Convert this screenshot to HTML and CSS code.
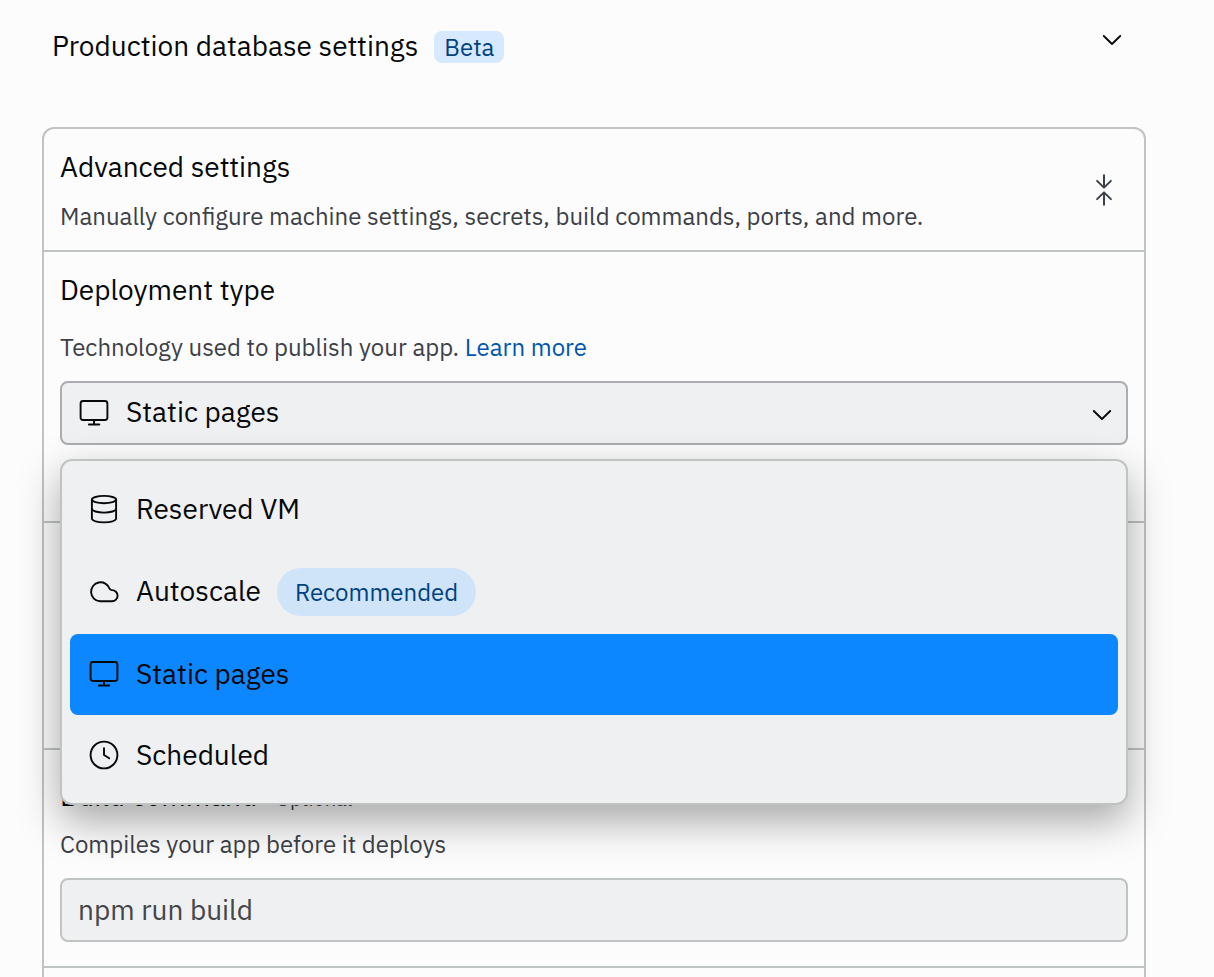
FILE: index.html
```html
<!DOCTYPE html>
<html lang="en">
<head>
<meta charset="utf-8">
<title>Publishing settings</title>
<link rel="stylesheet" href="styles.css">
</head>
<body>
<header class="db-header">
  <h2 class="title">Production database settings</h2>
  <span class="badge">Beta</span>
  <svg class="chevron db-chevron" viewBox="0 0 20 12"><path d="M1.8 2 10 10l8.2-8"/></svg>
</header>

<main class="card">
  <section class="section advanced">
    <div>
      <h2 class="title">Advanced settings</h2>
      <p class="hint">Manually configure machine settings, secrets, build commands, ports, and more.</p>
    </div>
    <svg class="collapse" viewBox="0 0 20 34"><path d="M10 2.3v12.3M3.1 7.9l6.9 6.7 6.9-6.7M10 31.7V19.4M3.1 26.1l6.9-6.7 6.9 6.7"/></svg>
  </section>

  <section class="section deployment">
    <h2 class="title">Deployment type</h2>
    <p class="hint">Technology used to publish your app. <a class="link" href="#">Learn more</a></p>
    <div class="select-wrap">
      <div class="select">
        <svg class="icon" viewBox="0 0 32 32"><rect x="2.6" y="4" width="26.8" height="19" rx="2.5"/><path d="M16 23v4.5M10.9 27.5h10.4"/></svg>
        <span class="select-value">Static pages</span>
        <svg class="chevron" viewBox="0 0 20 12"><path d="M1.8 2 10 10l8.2-8"/></svg>
      </div>
      <ul class="menu">
        <li class="option">
          <svg class="icon" viewBox="0 0 32 32"><ellipse cx="16" cy="6.6" rx="12.1" ry="3.7"/><path d="M3.9 6.6v19c0 2.1 5.4 3.8 12.1 3.8s12.1-1.7 12.1-3.8v-19M3.9 15.8c0 2.1 5.4 3.8 12.1 3.8s12.1-1.7 12.1-3.8"/></svg>
          <span>Reserved VM</span>
        </li>
        <li class="option option-tall">
          <svg class="icon" viewBox="0 0 32 32"><path d="M12 25.3h12a5.4 5.4 0 0 0 0-11.2c-.9 0-1.8-.4-2.4-1.3A9.5 9.5 0 1 0 12 25.3z"/></svg>
          <span class="label">Autoscale</span>
          <span class="pill">Recommended</span>
        </li>
        <li class="option option-selected">
          <svg class="icon" viewBox="0 0 32 32"><rect x="2.6" y="4" width="26.8" height="19" rx="2.5"/><path d="M16 23v4.5M10.9 27.5h10.4"/></svg>
          <span>Static pages</span>
        </li>
        <li class="option">
          <svg class="icon" viewBox="0 0 32 32"><circle cx="16" cy="16" r="13.4"/><path d="M16 9.3V16l5.2 3.2"/></svg>
          <span>Scheduled</span>
        </li>
      </ul>
    </div>
  </section>

  <section class="section spacer"></section>

  <section class="section build">
    <h2 class="title">Build command <span class="optional">Optional</span></h2>
    <p class="hint">Compiles your app before it deploys</p>
    <div class="input">npm run build</div>
  </section>
</main>
</body>
</html>
```
FILE: styles.css
```css
* { box-sizing: border-box; }

body {
  margin: 0;
  height: 977px;
  overflow: hidden;
  background: #fcfcfc;
  color: #07080a;
  font-family: "IBM Plex Sans", "Open Sans", sans-serif;
  font-size: 28px;
}

h2, p, ul { margin: 0; padding: 0; }

.title { height: 36px; font-size: 28px; font-weight: 400; line-height: 36px; white-space: nowrap; }
.hint { color: #3c4048; font-size: 24px; line-height: 32px; white-space: nowrap; }
.link { color: #0056ad; text-decoration: none; }

.db-header {
  display: flex;
  align-items: baseline;
  gap: 16px;
  height: 127px;
  padding: 28px 92px 0 52px;
}

.badge {
  padding: 0 10px;
  border-radius: 8px;
  background: #d7e9ff;
  color: #004182;
  font-size: 24px;
  line-height: 32px;
}

.chevron {
  width: 20px;
  height: 12px;
  margin-left: auto;
  fill: none;
  stroke: #07080a;
  stroke-width: 1.9;
  stroke-linecap: round;
  stroke-linejoin: round;
}
.db-chevron { align-self: flex-start; margin-top: 6px; }

.card {
  width: 1104px;
  height: 850px;
  margin-left: 42px;
  border: 2px solid #bfc3c2;
  border-bottom: 0;
  border-radius: 12px 12px 0 0;
}

.section { padding: 0 16px; border-bottom: 2px solid #bfc3c2; }

.advanced {
  display: flex;
  justify-content: space-between;
  align-items: flex-start;
  height: 123px;
  padding-top: 20px;
}
.advanced .hint { margin-top: 15px; }

.collapse {
  width: 20px;
  height: 34px;
  margin: 24px 14px 0 0;
  fill: none;
  stroke: #3c4048;
  stroke-width: 2;
  stroke-linecap: round;
  stroke-linejoin: round;
}

.deployment { height: 271px; padding-top: 20px; }
.deployment .hint { margin-top: 23px; }

.select-wrap { position: relative; margin-top: 18px; }

.select {
  display: flex;
  align-items: center;
  gap: 16px;
  height: 64px;
  padding: 0 14px 0 16px;
  border: 2px solid #abadb0;
  border-radius: 8px;
  background: #eff0f2;
}
.select-value { line-height: 36px; margin-top: -2px; }
.select .chevron { margin-top: 4px; }

.icon {
  flex: none;
  width: 32px;
  height: 32px;
  fill: none;
  stroke: #07080a;
  stroke-width: 1.9;
  stroke-linecap: round;
  stroke-linejoin: round;
}

.menu {
  position: absolute;
  z-index: 1;
  top: 78px;
  left: 0;
  width: 100%;
  height: 346px;
  padding: 8px;
  border: 2px solid #bfc3c2;
  border-radius: 12px;
  background: #eff0f2;
  box-shadow: 0 16px 40px rgba(0, 0, 0, .34);
  list-style: none;
}

.option {
  display: flex;
  align-items: center;
  gap: 16px;
  height: 81px;
  padding: 0 0 1px 18px;
  border-radius: 8px;
  line-height: 36px;
}
.option-tall { height: 84px; padding-bottom: 0; }
.option-tall .label { margin-top: -2px; }
.option-selected { background: #0d87ff; }

.pill {
  height: 48px;
  padding: 0 18px;
  border-radius: 24px;
  background: #cfe4f9;
  color: #004182;
  font-size: 24px;
  line-height: 48px;
}

.spacer { height: 227px; }

.build { height: 218px; padding-top: 28px; }
.build .hint { margin-top: 14px; }
.optional { margin-left: 12px; color: #3c4048; font-size: 20px; line-height: 1; }

.input {
  height: 64px;
  margin-top: 18px;
  padding: 0 16px;
  border: 2px solid #bfc3c2;
  border-radius: 8px;
  background: #eff0f2;
  color: #444648;
  line-height: 59px;
}
```
